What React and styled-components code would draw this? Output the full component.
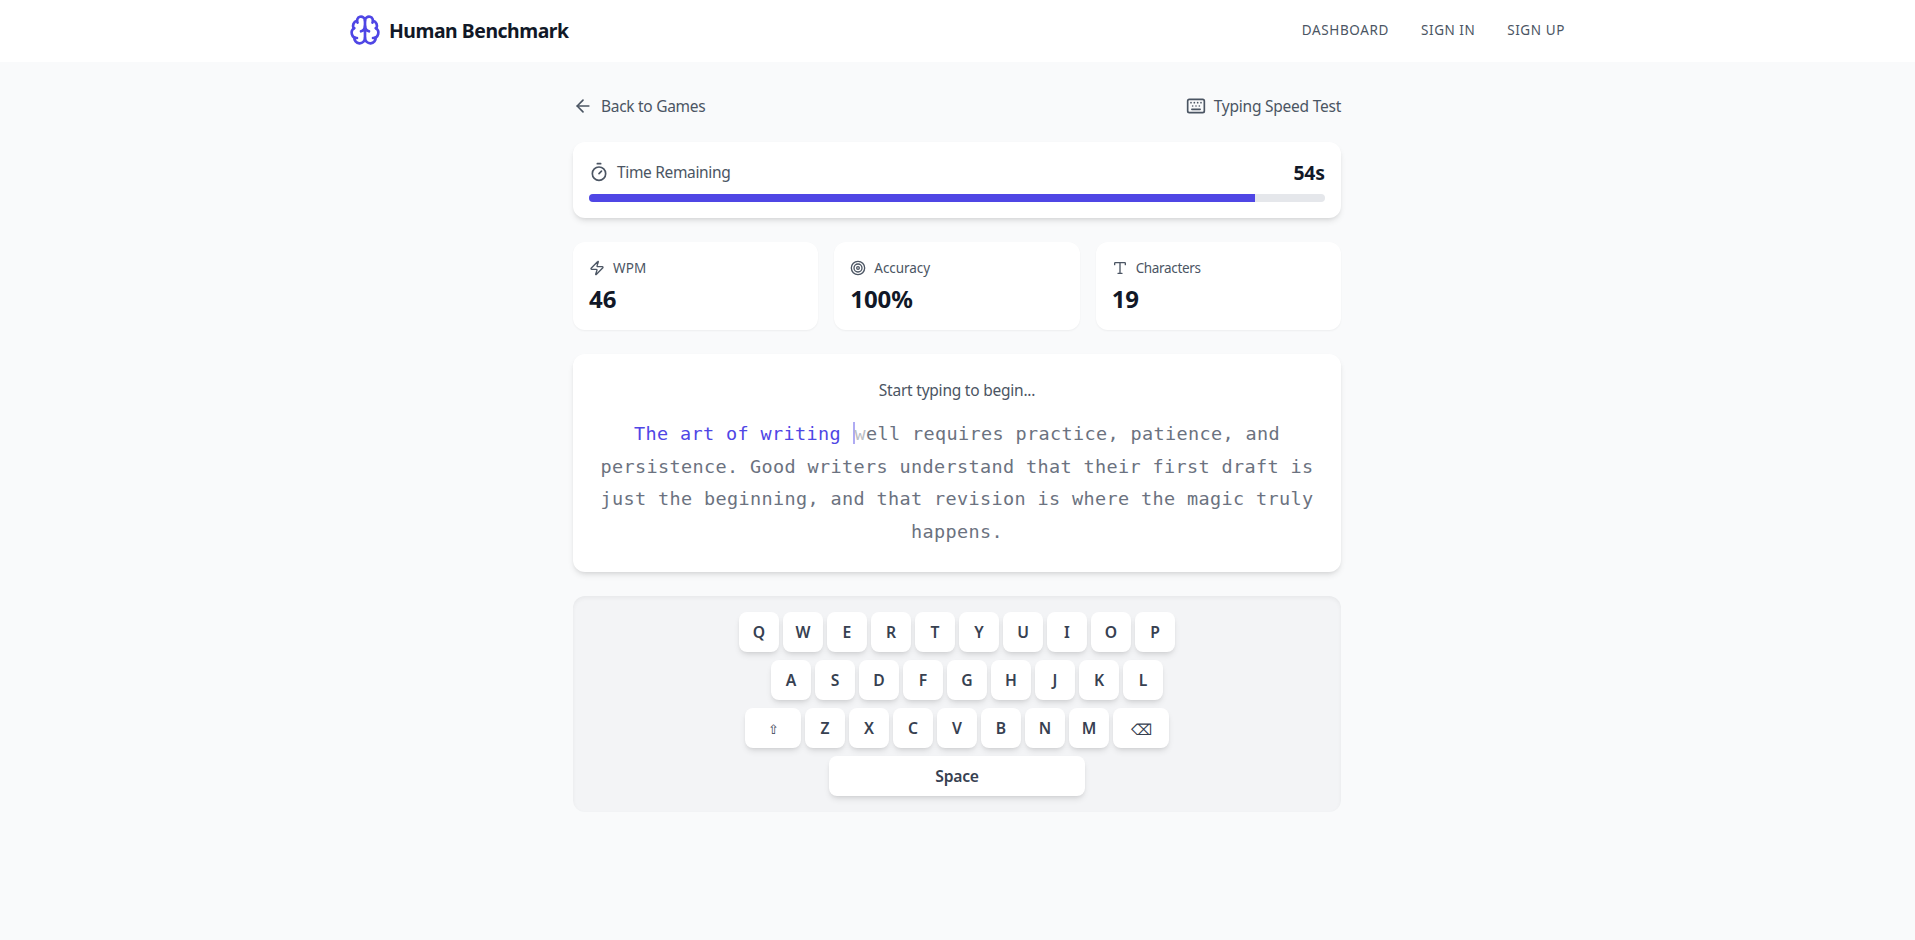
import React from "react";
import styled, { createGlobalStyle, css } from "styled-components";
import { Brain, ArrowLeft, Keyboard, Timer, Zap, Target, Type } from "lucide-react";

const sans = `"Noto Sans", "Open Sans", sans-serif`;
const mono = `"DejaVu Sans Mono", monospace`;

const GlobalStyle = createGlobalStyle`
  *, *::before, *::after { box-sizing: border-box; }
  body { margin: 0; background: #f9fafb; font-family: ${sans}; font-size: 15.5px; line-height: 24px; color: #111827; }
  svg { display: block; flex-shrink: 0; }
`;

const Page = styled.div`
  min-height: 940px;
  background: #f9fafb;
`;

const Header = styled.header`
  height: 62px;
  padding-right: 1px;
  background: #fff;
`;

const HeaderInner = styled.div`
  max-width: 1280px;
  margin: 0 auto;
  padding: 14px 32px 16px;
  display: flex;
  align-items: center;
  justify-content: space-between;
`;

const Brand = styled.a`
  display: flex;
  align-items: center;
  gap: 8px;
  svg { color: #4f46e5; }
`;

const Heading = styled.span`
  padding-top: 1px;
  font-size: 19.4px;
  line-height: 27px;
  font-weight: 700;
  letter-spacing: ${(p) => p.$track || 0}px;
`;

const Nav = styled.nav`
  display: flex;
  gap: 32px;
`;

const NavLink = styled.a`
  font-size: 13.5px;
  line-height: 20px;
  color: #4b5563;
  text-transform: uppercase;
  letter-spacing: ${(p) => p.$track}px;
`;

const Content = styled.div`
  padding: 32px 1px 0 0;
`;

const Main = styled.main`
  width: 768px;
  margin: 0 auto;
  display: flex;
  flex-direction: column;
  gap: 24px;
`;

const Bar = styled.div`
  display: flex;
  align-items: center;
  justify-content: space-between;
`;

const Labelled = styled.span`
  display: flex;
  align-items: center;
  gap: 8px;
  color: #4b5563;
  font-size: ${(p) => (p.$small ? "13.5px" : "15.5px")};
  line-height: ${(p) => (p.$small ? "20px" : "24px")};
  letter-spacing: ${(p) => p.$track || 0}px;
`;

const Card = styled.section`
  background: #fff;
  border-radius: 12px;
  padding: ${(p) => p.$pad || 16}px;
  box-shadow: ${(p) =>
    p.$flat
      ? "0 1px 2px 0 rgba(0,0,0,.05)"
      : "0 4px 6px -1px rgba(0,0,0,.1), 0 2px 4px -2px rgba(0,0,0,.1)"};
`;

const Track = styled.div`
  margin-top: 8px;
  height: 8px;
  border-radius: 4px;
  overflow: hidden;
  background: #e5e7eb;
`;

const Fill = styled.div`
  height: 100%;
  background: #4f46e5;
`;

const Stats = styled.div`
  display: grid;
  grid-template-columns: repeat(3, 1fr);
  gap: 16px;
`;

const StatValue = styled.div`
  margin-top: 4px;
  padding-top: 1px;
  font-size: 24px;
  line-height: 31px;
  font-weight: 700;
  letter-spacing: -0.1px;
`;

const Prompt = styled.p`
  margin: 0 0 16px;
  text-align: center;
  color: #4b5563;
  letter-spacing: -0.23px;
`;

const Passage = styled.p`
  margin: 0;
  text-align: center;
  font-family: ${mono};
  font-size: 18.5px;
  line-height: 32.5px;
  letter-spacing: 0.362px;
  color: #6b7280;
`;

const Typed = styled.span`
  color: #4f46e5;
`;

const Current = styled.span`
  border-left: 2px solid #4f46e5;
  padding: 1px 0 0;
  opacity: 0.45;
`;

const Board = styled.section`
  background: #f3f4f6;
  border-radius: 12px;
  padding: 16px;
  display: flex;
  flex-direction: column;
  gap: 8px;
  box-shadow: inset 0 2px 4px 0 rgba(0, 0, 0, 0.05);
`;

const KeyRow = styled.div`
  display: flex;
  justify-content: center;
  gap: 4px;
  margin-left: ${(p) => p.$indent || 0}px;
`;

const Key = styled.button`
  width: ${(p) => p.$width || 40}px;
  height: 40px;
  padding: 0;
  border: 0;
  border-radius: 8px;
  background: #fff;
  color: #374151;
  font: 580 15.7px/24px ${sans};
  letter-spacing: ${(p) => p.$track || 0}px;
  display: flex;
  align-items: center;
  justify-content: center;
  box-shadow: 0 4px 6px -1px rgba(0, 0, 0, 0.1), 0 2px 4px -2px rgba(0, 0, 0, 0.1);
  ${(p) =>
    p.$symbol &&
    css`
      padding-top: 1px;
      font-size: ${p.$symbol}px;
      font-weight: 400;
    `}
`;

const letters = (row) => row.split("").map((k) => <Key key={k}>{k}</Key>);

const links = [
  { label: "Dashboard", track: 0.65 },
  { label: "Sign In", track: 0.52 },
  { label: "Sign Up", track: 0.6 },
];

const stats = [
  { Icon: Zap, label: "WPM", value: "46", track: 0.15 },
  { Icon: Target, label: "Accuracy", value: "100%", track: -0.07 },
  { Icon: Type, label: "Characters", value: "19", track: -0.34 },
];

export default function App() {
  return (
    <Page>
      <GlobalStyle />
      <Header>
        <HeaderInner>
          <Brand>
            <Brain size={32} />
            <Heading $track={-0.46}>Human Benchmark</Heading>
          </Brand>
          <Nav>
            {links.map(({ label, track }) => (
              <NavLink key={label} $track={track}>
                {label}
              </NavLink>
            ))}
          </Nav>
        </HeaderInner>
      </Header>
      <Content>
        <Main>
          <Bar>
            <Labelled $track={-0.29}>
              <ArrowLeft size={20} />
              Back to Games
            </Labelled>
            <Labelled $track={-0.24}>
              <Keyboard size={20} />
              Typing Speed Test
            </Labelled>
          </Bar>
          <Card>
            <Bar>
              <Labelled $track={-0.34}>
                <Timer size={20} />
                Time Remaining
              </Labelled>
              <Heading $track={-0.1}>54s</Heading>
            </Bar>
            <Track>
              <Fill style={{ width: "90.5%" }} />
            </Track>
          </Card>
          <Stats>
            {stats.map(({ Icon, label, value, track }) => (
              <Card key={label} $flat>
                <Labelled $small $track={track}>
                  <Icon size={16} />
                  {label}
                </Labelled>
                <StatValue>{value}</StatValue>
              </Card>
            ))}
          </Stats>
          <Card $pad={24}>
            <Prompt>Start typing to begin...</Prompt>
            <Passage>
              <Typed>The art of writing </Typed>
              <Current>w</Current>
              ell requires practice, patience, and persistence. Good writers understand that their
              first draft is just the beginning, and that revision is where the magic truly happens.
            </Passage>
          </Card>
          <Board>
            <KeyRow>{letters("QWERTYUIOP")}</KeyRow>
            <KeyRow $indent={20}>{letters("ASDFGHJKL")}</KeyRow>
            <KeyRow>
              <Key $width={56} $symbol={13}>⇧</Key>
              {letters("ZXCVBNM")}
              <Key $width={56} $symbol={14.5}>⌫</Key>
            </KeyRow>
            <KeyRow>
              <Key $width={256} $track={-0.25}>Space</Key>
            </KeyRow>
          </Board>
        </Main>
      </Content>
    </Page>
  );
}
